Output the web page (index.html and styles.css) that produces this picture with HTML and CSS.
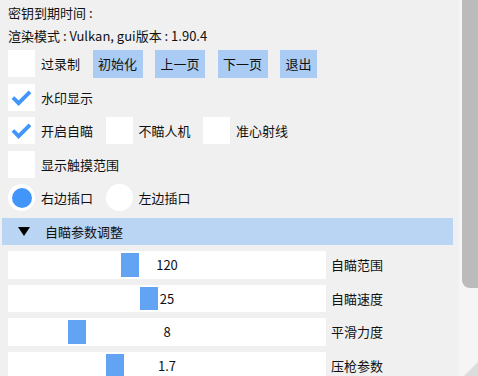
FILE: index.html
```html
<!DOCTYPE html>
<html lang="zh">
<head>
  <meta charset="UTF-8">
  <title>设置</title>
  <link rel="stylesheet" href="styles.css">
</head>
<body>
  <div class="window">
    <div class="content">
      <p class="line">密钥到期时间 :</p>
      <p class="line">渲染模式 : Vulkan, gui版本 : 1.90.4</p>

      <div class="row">
        <label class="check"><span class="box"></span>过录制</label>
        <button class="btn">初始化</button>
        <button class="btn">上一页</button>
        <button class="btn">下一页</button>
        <button class="btn">退出</button>
      </div>

      <div class="row">
        <label class="check">
          <span class="box"><svg viewBox="0 0 27 27"><polyline points="4.9,13.5 10.6,19.2 22,7.8"/></svg></span>水印显示
        </label>
      </div>

      <div class="row">
        <label class="check">
          <span class="box"><svg viewBox="0 0 27 27"><polyline points="4.9,13.5 10.6,19.2 22,7.8"/></svg></span>开启自瞄
        </label>
        <label class="check"><span class="box"></span>不瞄人机</label>
        <label class="check"><span class="box"></span>准心射线</label>
      </div>

      <div class="row">
        <label class="check"><span class="box"></span>显示触摸范围</label>
      </div>

      <div class="row">
        <label class="check"><span class="radio on"></span>右边插口</label>
        <label class="check"><span class="radio"></span>左边插口</label>
      </div>

      <div class="header">
        <svg class="arrow" viewBox="0 0 12 9"><polygon points="0,0 12,0 6,9"/></svg>
        自瞄参数调整
      </div>

      <div class="slider-row">
        <div class="slider"><span class="grab" style="left:113px"></span><span class="value">120</span></div>
        <span class="slider-label">自瞄范围</span>
      </div>
      <div class="slider-row">
        <div class="slider"><span class="grab" style="left:132px"></span><span class="value">25</span></div>
        <span class="slider-label">自瞄速度</span>
      </div>
      <div class="slider-row">
        <div class="slider"><span class="grab" style="left:60px"></span><span class="value">8</span></div>
        <span class="slider-label">平滑力度</span>
      </div>
      <div class="slider-row">
        <div class="slider"><span class="grab" style="left:98px"></span><span class="value">1.7</span></div>
        <span class="slider-label">压枪参数</span>
      </div>
    </div>

    <div class="scrollbar"><div class="scroll-grab"></div></div>
    <div class="grip"></div>
  </div>
</body>
</html>
```

FILE: styles.css
```css
html, body {
  margin: 0;
  height: 100%;
  overflow: hidden;
}
body {
  background: #f0f0f0;
  color: #111;
  font-family: "Noto Sans CJK SC", "Noto Sans", sans-serif;
  font-size: 13px;
}
.window {
  position: relative;
  height: 376px;
  overflow: hidden;
}
.content {
  display: flex;
  flex-direction: column;
  gap: 6px;
  padding: 5px 0 0 8px;
}
.line {
  margin: 0;
  height: 16.5px;
  line-height: 16.5px;
  white-space: nowrap;
}
.row {
  display: flex;
  align-items: center;
  gap: 12.5px;
  height: 27.5px;
}
.check {
  display: flex;
  align-items: center;
  gap: 6px;
  white-space: nowrap;
}
.box {
  width: 27px;
  height: 27px;
  background: #fff;
  display: block;
}
.box svg {
  display: block;
  width: 27px;
  height: 27px;
}
.box polyline {
  fill: none;
  stroke: #4296fa;
  stroke-width: 3.8;
}
.radio {
  width: 27px;
  height: 27px;
  border-radius: 50%;
  background: #fff;
  display: flex;
  align-items: center;
  justify-content: center;
}
.radio.on::after {
  content: "";
  width: 20px;
  height: 20px;
  border-radius: 50%;
  background: #4296fa;
}
.btn {
  height: 27.5px;
  padding: 0 5.5px;
  border: none;
  background: #aaccf4;
  color: #111;
  font: inherit;
}
.header {
  display: flex;
  align-items: center;
  margin-left: -6px;
  width: 451px;
  height: 27.5px;
  background: #bad4f3;
}
.arrow {
  width: 12px;
  height: 9px;
  margin: 1px 15px 0 16px;
}
.arrow polygon {
  fill: #000;
}
.slider-row {
  display: flex;
  align-items: center;
  gap: 5px;
  height: 27.5px;
}
.slider {
  position: relative;
  width: 318px;
  height: 27.5px;
  background: #fff;
  display: flex;
  align-items: center;
  justify-content: center;
}
.grab {
  position: absolute;
  top: 2px;
  bottom: 2px;
  width: 18px;
  background: #62a3f4;
}
.value {
  position: relative;
}
.slider-label {
  white-space: nowrap;
}
.scrollbar {
  position: absolute;
  top: 0;
  right: 0;
  width: 19px;
  height: 376px;
  background: #f5f5f5;
}
.scroll-grab {
  margin-left: 3px;
  height: 288px;
  background: #bbbbbb;
  border-radius: 0 0 0 8px;
}
.grip {
  position: absolute;
  right: 0;
  bottom: 0;
  width: 0;
  height: 0;
  border-left: 14px solid transparent;
  border-bottom: 14px solid #dcdcdc;
}
```
